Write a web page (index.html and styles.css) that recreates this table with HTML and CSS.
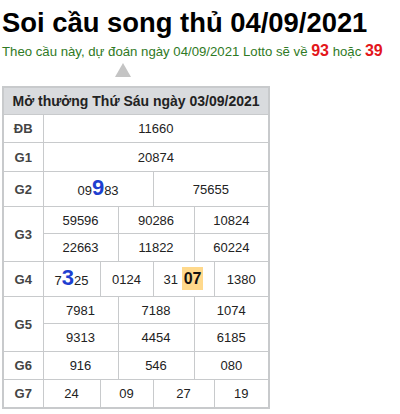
FILE: index.html
```html
<!DOCTYPE html>
<html lang="vi">
<head>
<meta charset="utf-8">
<title>Soi cầu song thủ 04/09/2021</title>
<link rel="stylesheet" href="styles.css">
</head>
<body>
<h1 class="title">Soi cầu song thủ 04/09/2021</h1>
<p class="lead">Theo cầu này, dự đoán ngày 04/09/2021 Lotto sẽ về <b class="hot">93</b> hoặc <b class="hot">39</b></p>
<div class="pointer"></div>
<table class="kq">
  <colgroup>
    <col class="c-label">
    <col class="c1"><col class="c2"><col class="c3"><col class="c4"><col class="c5"><col class="c6">
  </colgroup>
  <thead>
    <tr><th colspan="7" class="head">Mở thưởng Thứ Sáu ngày 03/09/2021</th></tr>
  </thead>
  <tbody>
    <tr class="r"><td class="lbl">ĐB</td><td colspan="6">11660</td></tr>
    <tr class="r g1"><td class="lbl">G1</td><td colspan="6">20874</td></tr>
    <tr class="r tall"><td class="lbl">G2</td><td colspan="3">09<b class="pick">9</b>83</td><td colspan="3">75655</td></tr>
    <tr class="r sub1"><td class="lbl" rowspan="2">G3</td><td colspan="2">59596</td><td colspan="2">90286</td><td colspan="2">10824</td></tr>
    <tr class="r sub2"><td colspan="2">22663</td><td colspan="2">11822</td><td colspan="2">60224</td></tr>
    <tr class="r tall"><td class="lbl">G4</td><td>7<b class="pick">3</b>25</td><td colspan="2">0124</td><td colspan="2">31 <b class="mark">07</b></td><td>1380</td></tr>
    <tr class="r sub1"><td class="lbl" rowspan="2">G5</td><td colspan="2">7981</td><td colspan="2">7188</td><td colspan="2">1074</td></tr>
    <tr class="r sub2"><td colspan="2">9313</td><td colspan="2">4454</td><td colspan="2">6185</td></tr>
    <tr class="r"><td class="lbl">G6</td><td colspan="2">916</td><td colspan="2">546</td><td colspan="2">080</td></tr>
    <tr class="r"><td class="lbl">G7</td><td>24</td><td colspan="2">09</td><td colspan="2">27</td><td>19</td></tr>
  </tbody>
</table>
</body>
</html>
```

FILE: styles.css
```css
html, body {
  margin: 0;
  padding: 0;
  background: #ffffff;
}
body {
  padding: 0 2px;
  font-family: "Liberation Sans", Arial, sans-serif;
  color: #222222;
}
.title {
  margin: 7px 0 0;
  font-size: 27.4px;
  line-height: 32px;
  font-weight: bold;
  color: #000000;
  white-space: nowrap;
}
.lead {
  margin: 2px 0 0;
  font-size: 13.2px;
  line-height: 20px;
  color: #2f7a25;
  white-space: nowrap;
}
.hot {
  color: #e3161b;
  font-size: 16px;
}
.pointer {
  width: 0;
  height: 0;
  margin: 1px 0 0 113px;
  border-left: 8px solid transparent;
  border-right: 8px solid transparent;
  border-bottom: 14px solid #c4c4c4;
}
.kq {
  margin-top: 9px;
  width: 266px;
  border-collapse: collapse;
  table-layout: fixed;
  border: 2px solid #c8cacc;
  font-size: 13px;
}
.c-label { width: 40px; }
.c1 { width: 57px; }
.c2 { width: 18px; }
.c3 { width: 35px; }
.c4 { width: 41px; }
.c5 { width: 20px; }
.c6 { width: 55px; }
.kq th, .kq td {
  border: 1px solid #c8cacc;
  text-align: center;
  padding: 0;
  line-height: 15px;
}
.head {
  background: #d9dbde;
  color: #222222;
  font-weight: bold;
  font-size: 14px;
  height: 26px;
  white-space: nowrap;
}
.r td { height: 27px; }
.r.g1 td { height: 28px; }
.r.tall td { height: 34px; }
.r.sub1 td { height: 26px; }
.r.sub2 td { height: 27px; }
.lbl {
  font-weight: bold;
  color: #444444;
}
.pick {
  color: #1e3fd0;
  font-size: 22px;
}
.mark {
  background: #ffd98c;
  font-size: 16px;
  padding: 3px 2px;
  color: #111111;
}
```
